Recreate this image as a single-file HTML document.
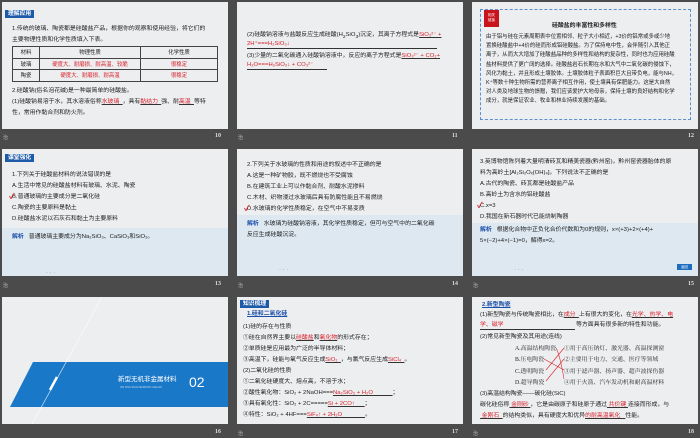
<!DOCTYPE html><html><head><meta charset="utf-8"><style>
*{margin:0;padding:0;box-sizing:border-box}
body{width:700px;height:438px;background:#4b4b4b;position:relative;overflow:hidden;font-family:"Liberation Sans","Noto Sans CJK SC",sans-serif;}
.s{position:absolute;width:226px;height:127px;background:#eceef0;overflow:hidden}
.t{position:absolute;font-size:5.9px;line-height:7px;white-space:nowrap;color:#222}
.r{color:#d9232d;text-decoration:underline;text-decoration-color:#333}
.b{color:#1a4fa8;font-weight:bold}
.tag{position:absolute;left:3px;top:8px;background:#1d5aa8;color:#fff;font-size:5.8px;line-height:8px;padding:0 3px;font-weight:bold}
.n{position:absolute;color:#ddd;font-size:6px;font-weight:bold;font-family:"Liberation Serif",serif}
.y{position:absolute;color:#bbb;font-size:5px}
.an{position:absolute;left:0;width:226px;background:#dde8f1}
.ck{color:#d9232d;font-weight:bold;font-size:8px;position:absolute}
table{position:absolute;border-collapse:collapse;font-size:5.4px;color:#222}
td{border:0.8px solid #444;height:11.5px;text-align:center;padding:0 2px}
</style></head><body>

<!-- slide 10 -->
<div class="s" style="left:2px;top:2px">
<div class="tag">理解应用</div>
<div class="t" style="left:10px;top:24px">1.传统的玻璃、陶瓷都是硅酸盐产品，根据你的观察和使用经验，将它们的</div>
<div class="t" style="left:10px;top:35px">主要物理性质和化学性质填入下表。</div>
<table style="left:10px;top:44px;width:206px"><tr><td style="width:27px">材料</td><td style="width:101px">物理性质</td><td>化学性质</td></tr>
<tr><td>玻璃</td><td style="color:#d9232d">硬度大、耐磨损、耐高温、较脆</td><td style="color:#d9232d">很稳定</td></tr>
<tr><td>陶瓷</td><td style="color:#d9232d">硬度大、耐磨损、耐高温</td><td style="color:#d9232d">很稳定</td></tr></table>
<div class="t" style="left:10px;top:86px">2.硅酸钠(俗名泡花碱)是一种最简单的硅酸盐。</div>
<div class="t" style="left:10px;top:97px">(1)硅酸钠易溶于水，其水溶液俗称<span class="r">水玻璃&nbsp;&nbsp;</span>，具有<span class="r">黏结力&nbsp;&nbsp;</span>强、耐<span class="r">高温&nbsp;&nbsp;</span>等特</div>
<div class="t" style="left:10px;top:108px">性，常用作黏合剂和防火剂。</div>
</div>
<div class="y" style="left:3px;top:134px">治</div><div class="n" style="left:215px;top:133px">10</div>

<!-- slide 11 -->
<div class="s" style="left:237px;top:2px">
<div class="t" style="left:10px;top:30px">(2)硅酸钠溶液与盐酸反应生成硅酸(H<sub>2</sub>SiO<sub>3</sub>)沉淀，其离子方程式是<span class="r">SiO₃²⁻ +</span></div>
<div class="t" style="left:10px;top:39px;border-bottom:0.6px solid #333;width:190px"><span style="color:#d9232d">2H⁺===H₂SiO₃↓</span></div>
<div class="t" style="left:10px;top:51px">(3)少量的二氧化碳通入硅酸钠溶液中，反应的离子方程式是<span class="r">SiO₃²⁻ + CO₂+</span></div>
<div class="t" style="left:10px;top:60px;border-bottom:0.6px solid #333;width:80px"><span style="color:#d9232d">H₂O===H₂SiO₃↓ + CO₃²⁻</span></div>
</div>
<div class="y" style="left:238px;top:134px">治</div><div class="n" style="left:452px;top:133px">11</div>

<!-- slide 12 -->
<div class="s" style="left:472px;top:2px">
<div style="position:absolute;left:8px;top:7px;width:211px;height:111px;border:0.8px dashed #5b8fd0"></div>
<div style="position:absolute;left:12px;top:8px;width:15px;height:17px;background:#c8141c;color:#fff;font-size:3.5px;text-align:center;line-height:5px;padding-top:3px">相关<br>链接</div>
<div class="t" style="left:80px;top:21px;font-weight:bold">硅酸盐的丰富性和多样性</div>
<div class="t" style="left:14px;top:31px;font-size:5.4px;line-height:9.2px">由于铝与硅在元素周期表中位置相邻、粒子大小相近，+3价的铝常或多或少地<br>置换硅酸盐中+4价的硅而形成铝硅酸盐。为了保持电中性，会伴随引入其他正<br>离子，从而大大增加了硅酸盐品种的多样性和结构的复杂性，同时也为应用硅酸<br>盐材料提供了更广阔的选择。硅酸盐岩石长期在水和大气中二氧化碳的侵蚀下，<br>风化为黏土，并且形成土壤胶体。土壤胶体粒子表面积巨大且带负电，能与NH，<br>K⁺等数十种生物所需的营养离子相互作用，使土壤具有保肥能力。这是大自然<br>对人类及地球生物的馈赠，我们应该爱护大地母亲，保持土壤的良好结构和化学<br>成分，就是保证农业、牧业和林业持续发展的基础。</div>
</div>
<div class="n" style="left:688px;top:133px">12</div>

<!-- slide 13 -->
<div class="s" style="left:2px;top:149px">
<div class="tag" style="top:5px">课堂强化</div>
<div class="t" style="left:10px;top:23px">1.下列关于硅酸盐材料的说法错误的是</div>
<div class="t" style="left:10px;top:34px">A.生活中常见的硅酸盐材料有玻璃、水泥、陶瓷</div>
<div class="t" style="left:10px;top:45px">B.普通玻璃的主要成分是二氧化硅</div>
<div class="ck" style="left:7px;top:42px">✓</div>
<div class="t" style="left:10px;top:56px">C.陶瓷的主要原料是黏土</div>
<div class="t" style="left:10px;top:67px">D.硅酸盐水泥以石灰石和黏土为主要原料</div>
<div class="an" style="top:79px;height:48px"></div>
<div class="t" style="left:10px;top:85px"><span class="b">解析</span>&nbsp;&nbsp;&nbsp;普通玻璃主要成分为Na₂SiO₃、CaSiO₃和SiO₂。</div>
<div class="t" style="left:44px;top:121px;color:#888">· · ·</div>
</div>
<div class="y" style="left:3px;top:282px">治</div><div class="n" style="left:215px;top:281px">13</div>

<!-- slide 14 -->
<div class="s" style="left:237px;top:149px">
<div class="t" style="left:10px;top:13px">2.下列关于水玻璃的性质和用途的叙述中不正确的是</div>
<div class="t" style="left:10px;top:24px">A.这是一种矿物胶，既不燃烧也不受腐蚀</div>
<div class="t" style="left:10px;top:35px">B.在建筑工业上可以作黏合剂、耐酸水泥掺料</div>
<div class="t" style="left:10px;top:46px">C.木材、织物浸过水玻璃后具有防腐性能且不易燃烧</div>
<div class="t" style="left:10px;top:57px">D.水玻璃的化学性质稳定，在空气中不易变质</div>
<div class="ck" style="left:7px;top:54px">✓</div>
<div class="an" style="top:66px;height:61px"></div>
<div class="t" style="left:10px;top:72px"><span class="b">解析</span>&nbsp;&nbsp;&nbsp;水玻璃为硅酸钠溶液，其化学性质稳定，但可与空气中的二氧化碳</div>
<div class="t" style="left:10px;top:83px">反应生成硅酸沉淀。</div>
<div class="t" style="left:42px;top:118px;color:#888">· · ·</div>
</div>
<div class="y" style="left:238px;top:282px">治</div><div class="n" style="left:452px;top:281px">14</div>

<!-- slide 15 -->
<div class="s" style="left:472px;top:149px">
<div class="t" style="left:8px;top:10px">3.英博物馆陈列着大量明清砖瓦和精美瓷器(黔州窑)，黔州窑瓷器胎体的原</div>
<div class="t" style="left:8px;top:21px">料为高岭土[Al₂Si₂Oₓ(OH)₄]。下列说法不正确的是</div>
<div class="t" style="left:8px;top:32px">A.古代的陶瓷、砖瓦都是硅酸盐产品</div>
<div class="t" style="left:8px;top:43px">B.高岭土为含水的铝硅酸盐</div>
<div class="t" style="left:8px;top:54px">C.x=3</div>
<div class="ck" style="left:5px;top:51px">✓</div>
<div class="t" style="left:8px;top:65px">D.我国在新石器时代已能烧制陶器</div>
<div class="an" style="top:74px;height:53px"></div>
<div class="t" style="left:8px;top:78px"><span class="b">解析</span>&nbsp;&nbsp;&nbsp;根据化合物中正负化合价代数和为0的规则，x×(+3)+2×(+4)+</div>
<div class="t" style="left:8px;top:89px">5×(−2)+4×(−1)=0，解得x=2。</div>
<div class="t" style="left:42px;top:118px;color:#888">· · ·</div>
<div style="position:absolute;left:205px;top:115px;width:15px;height:6px;background:#1d6cc0;color:#fff;font-size:3.5px;text-align:center;line-height:6px">返回</div>
</div>
<div class="y" style="left:473px;top:282px">治</div><div class="n" style="left:688px;top:281px">15</div>

<!-- slide 16 -->
<div class="s" style="left:2px;top:297px">
<svg width="226" height="127" style="position:absolute;left:0;top:0">
<polygon points="31,65 226,65 226,110 8,110" fill="#1a78c8"/>
<line x1="100" y1="0" x2="30" y2="127" stroke="#fff" stroke-width="0.7" opacity="0.8"/>
<line x1="55" y1="80" x2="48" y2="93" stroke="#fff" stroke-width="2.5"/>
</svg>
<div class="t" style="left:116px;top:79px;color:#fff;font-size:6.5px">新型无机非金属材料</div>
<div class="t" style="left:118px;top:87px;color:#cde;font-size:2.5px">XIN XING WUJI FEIJINSHU CAILIAO</div>
<div class="t" style="left:187px;top:78px;color:#fff;font-size:14px;line-height:14px">02</div>
</div>
<div class="n" style="left:215px;top:429px">16</div>

<!-- slide 17 -->
<div class="s" style="left:237px;top:297px">
<div class="tag" style="top:3px">知识梳理</div>
<div class="t" style="left:10px;top:14px" ><span class="b" style="text-decoration:underline">1.硅和二氧化硅</span></div>
<div class="t" style="left:6px;top:25px;line-height:11px">(1)硅的存在与性质<br>①硅在自然界主要以<span class="r">硅酸盐</span>和<span class="r">氧化物</span>的形式存在；<br>②单质硅是应用最为广泛的半导体材料；<br>③高温下，硅能与氧气反应生成<span class="r">SiO₂&nbsp;&nbsp;</span>，与氯气反应生成<span class="r">SiCl₄&nbsp;&nbsp;</span>。<br>(2)二氧化硅的性质<br>①二氧化硅硬度大、熔点高，不溶于水；<br>②酸性氧化物：SiO₂ + 2NaOH===<span class="r">Na₂SiO₃ + H₂O&nbsp;&nbsp;&nbsp;&nbsp;&nbsp;&nbsp;&nbsp;&nbsp;&nbsp;&nbsp;&nbsp;&nbsp;</span>；<br>③具有氧化性：SiO₂ + 2C=====<span class="r">Si + 2CO↑&nbsp;&nbsp;&nbsp;&nbsp;&nbsp;&nbsp;</span>；<br>④特性：SiO₂ + 4HF===<span class="r">SiF₄↑ + 2H₂O&nbsp;&nbsp;&nbsp;&nbsp;&nbsp;&nbsp;&nbsp;&nbsp;&nbsp;&nbsp;&nbsp;&nbsp;&nbsp;&nbsp;</span>。</div>
</div>
<div class="y" style="left:238px;top:430px">治</div><div class="n" style="left:452px;top:429px">17</div>

<!-- slide 18 -->
<div class="s" style="left:472px;top:297px">
<div class="t" style="left:10px;top:5px"><span class="b" style="text-decoration:underline">2.新型陶瓷</span></div>
<div class="t" style="left:8px;top:15px">(1)新型陶瓷与传统陶瓷相比，在<span class="r">成分&nbsp;&nbsp;</span>上有很大的变化，在<span class="r">光学、热学、电</span></div>
<div class="t" style="left:8px;top:25px;width:95px;border-bottom:0.6px solid #333"><span style="color:#d9232d">学、磁学</span></div>
<div class="t" style="left:104px;top:25px">等方面具有很多新的特性和功能。</div>
<div class="t" style="left:8px;top:37px">(2)常见新型陶瓷及其用途(连线)</div>
<div class="t" style="left:43px;top:47px;font-family:'Liberation Serif','Noto Serif CJK SC',serif;line-height:11.3px">A.高温结构陶瓷<br>B.压电陶瓷<br>C.透明陶瓷<br>D.超导陶瓷</div>
<div class="t" style="left:92px;top:47px;font-family:'Liberation Serif','Noto Serif CJK SC',serif;line-height:11.3px">①用于高压钠灯、激光器、高温探测窗<br>②主要用于电力、交通、医疗等领域<br>③用于滤声器、扬声器、超声波探伤器<br>④用于火箭、汽车发动机和耐高温材料</div>
<svg width="226" height="127" style="position:absolute;left:0;top:0"><g stroke="#d9232d" stroke-width="0.6" fill="none">
<path d="M84,51 Q88,58 92,82"/><path d="M72,62 L92,73"/><path d="M74,73 L92,51"/><path d="M74,84 L92,62"/></g></svg>
<div class="t" style="left:8px;top:94px">(3)高温结构陶瓷——碳化硅(SiC)</div>
<div class="t" style="left:8px;top:105px">碳化硅俗称<span class="r">&nbsp;金刚砂&nbsp;</span>，它是由碳原子和硅原子通过<span class="r">&nbsp;共价键&nbsp;</span>连接而形成，与</div>
<div class="t" style="left:8px;top:116px"><span class="r">&nbsp;金刚石&nbsp;&nbsp;</span>的结构类似，具有硬度大和优异<span class="r">的耐高温氧化&nbsp;&nbsp;&nbsp;</span>性能。</div>
</div>
<div class="y" style="left:473px;top:430px">治</div><div class="n" style="left:688px;top:429px">18</div>

</body></html>
